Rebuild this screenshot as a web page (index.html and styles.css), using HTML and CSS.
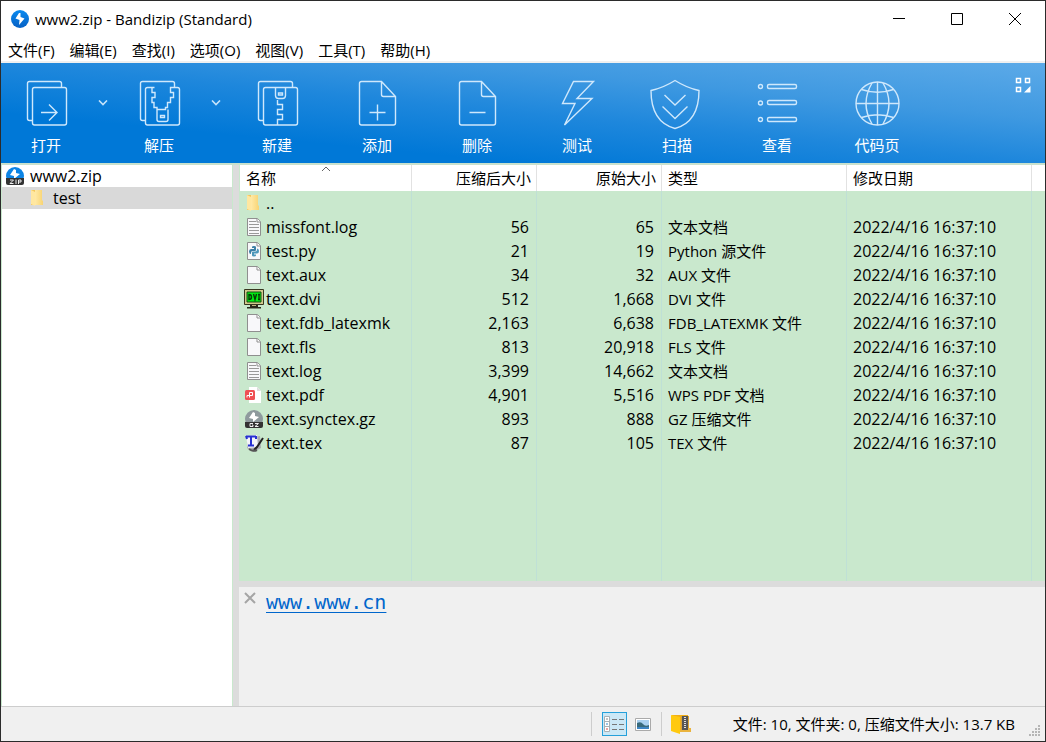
FILE: index.html
```html
<!DOCTYPE html>
<html lang="zh-CN">
<head>
<meta charset="utf-8">
<title>www2.zip - Bandizip (Standard)</title>
<link rel="stylesheet" href="styles.css">
</head>
<body>
<svg class="defs" aria-hidden="true">
  <defs>
    <linearGradient id="gold" x1="0" x2="1"><stop offset="0" stop-color="#ffe9a6"/><stop offset="1" stop-color="#f8d473"/></linearGradient>
    <linearGradient id="blue" x1="0" y1="0" x2="0" y2="1"><stop offset="0" stop-color="#0a8af0"/><stop offset="1" stop-color="#0761c4"/></linearGradient>
    <symbol id="folder" viewBox="0 0 20 20">
      <path d="M3 2h9v15H3z" fill="#f3c75c"/><path d="M7 2h7v10l1 1v4H7z" fill="url(#gold)"/><path d="M3 2l4 2v14l-4-2z" fill="#ffe7a0"/>
    </symbol>
    <symbol id="page" viewBox="0 0 20 20">
      <path d="M3.500 1.500h10l3 3v14h-13z" fill="#f8f8fa" stroke="#8f8f8f"/><path d="M13 1.500v3.500h3.500" fill="#fff" stroke="#8f8f8f"/>
    </symbol>
    <symbol id="text" viewBox="0 0 20 20">
      <use href="#page"/><path d="M5 4.500h7M5 7.500h10M5 10.500h10M5 13.500h10M5 16.500h10" stroke="#999"/>
    </symbol>
    <symbol id="python" viewBox="0 0 20 20">
      <use href="#page"/>
      <path d="M8 6q0-1 2-1t2 1v3q0 1-1 1H8.500q-1.500 0-1.500 2v1q-2 0-2-2.500T7 8h3V7H8z" fill="#3c7fa6"/>
      <path d="M12 14.500q0 1-2 1t-2-1v-3q0-1 1-1h2.500q1.500 0 1.500-2v-1q2 0 2 2.500t-2 2.500h-3v1h2z" fill="#4b96ba"/>
    </symbol>
    <symbol id="dvi" viewBox="0 0 20 20">
      <path d="M.500.500h19v15H.500z" fill="#d2c98d" stroke="#37351f"/><path d="M3 3h14v10H3z" fill="#00ed13" stroke="#174c13"/>
      <path d="M5 5.500v5q2.500 0 2.500-2.500T5 5.500zM9.500 5l1.500 5.500L12.500 5M15 5.500v5M14 5.500h2M14 10.500h2" fill="none" stroke="#063b06" stroke-width="1.400"/>
      <path d="M6 16h8v2H6zM3 18h14v1.500H3z" fill="#29291c"/><path d="M8 16h4v1H8z" fill="#bbb47c"/>
    </symbol>
    <symbol id="pdf" viewBox="0 0 20 20">
      <path d="M5 2h8l4 4v12H5z" fill="#fff"/><path d="M13 2l4 4h-4z" fill="#ddd"/><rect x="1" y="5" width="10" height="10" rx="1.500" fill="#ef5054"/>
      <path d="M3 12.500v-2h5.500v-3H5.500v5" fill="none" stroke="#fff"/>
    </symbol>
    <symbol id="gz" viewBox="0 0 20 20">
      <circle cx="10" cy="10" r="9" fill="#8e9a9d"/><path d="M9 3l-4 6 4 1v3l6-5-4-1V4z" fill="#fff"/>
      <path d="M1 13h18v4q0 2-2 2H3q-2 0-2-2z" fill="#333"/><path d="M9 14.500H6v3h3V16H8M11 14.500h3.500l-3.500 3h3.500" fill="none" stroke="#eee"/>
    </symbol>
    <symbol id="tex" viewBox="0 0 20 20">
      <path d="M4 5l12-2 1 12-8 4-6-4z" fill="#a9aab0"/><path d="M2 3l11-1 1 12-10 1z" fill="#f4f4fa"/><path d="M2 3.500h10M7 3v9M2 3l1 3M12 3v3M4 12.500h6" fill="none" stroke="#2730d2" stroke-width="2"/>
      <path d="M19 5l-6 9-3 3" fill="none" stroke="#222" stroke-width="2"/><path d="M5 16q4 3 8 1" fill="none" stroke="#555" stroke-width="2"/>
    </symbol>
    <symbol id="zip" viewBox="0 0 20 20">
      <circle cx="10" cy="10" r="9" fill="#0c84e4"/><path d="M9 3l-4 6 4 1v3l6-5-4-1V4z" fill="#fff"/>
      <path d="M1 12h18v5q0 2-2 2H3q-2 0-2-2z" fill="#333"/><path d="M5 14h3.500L5 17.500h3.500M11 13.500v4.500M13.500 18v-4H16v2h-2.500" fill="none" stroke="#eee"/>
    </symbol>
  </defs>
</svg>

<div class="window">
  <header class="titlebar">
    <svg class="logo" viewBox="0 0 18 18"><circle cx="9" cy="9" r="9" fill="url(#blue)"/><path d="M8 3L4.500 8.500l4 1.500L8 15l5.500-6.500-4-1.500V3z" fill="#fff"/></svg>
    <h1 class="title">www2.zip - Bandizip (Standard)</h1>
    <button class="wbtn" aria-label="最小化"><svg viewBox="0 0 12 12"><path d="M0 5.500h12"/></svg></button>
    <button class="wbtn" aria-label="最大化"><svg viewBox="0 0 12 12"><path d="M.500.500h11v11H.500z"/></svg></button>
    <button class="wbtn" aria-label="关闭"><svg viewBox="0 0 12 12"><path d="M0 0l12 12M12 0L0 12"/></svg></button>
  </header>

  <nav class="menu">
    <button>文件(F)</button><button>编辑(E)</button><button>查找(I)</button><button>选项(O)</button><button>视图(V)</button><button>工具(T)</button><button>帮助(H)</button>
  </nav>

  <div class="toolbar">
    <button class="tool split"><svg class="ticon" viewBox="0 0 50 50"><path d="M12 40.500H8.500q-2 0-2-2v-35q0-2 2-2h30q2 0 2 2V7"/><rect x="11.500" y="7.500" width="34" height="37.500" rx="2"/><path d="M20 32.500h16M28 24.500l8 8-8 8"/></svg>打开</button>
    <button class="drop" aria-label="打开选项"><svg viewBox="0 0 10 6"><path d="M1 .500l4 4 4-4"/></svg></button>
    <button class="tool split"><svg class="ticon" viewBox="0 0 50 50"><path d="M12 40.500H8.500q-2 0-2-2v-35q0-2 2-2h30q2 0 2 2V7"/><path d="M20.500 7.500h-7q-2 0-2 2V43q0 2 2 2h30q2 0 2-2V9.500q0-2-2-2h-7v5h3v5h-3v5h-3v5h-2v2H23v-2h-3v-5h-2v-5h3v-5h-3v-5zM23 29.500v10q0 2 2 2h7q2 0 2-2v-10"/><path d="M26.500 35.500h4v2h-4z"/></svg>解压</button>
    <button class="drop" aria-label="解压选项"><svg viewBox="0 0 10 6"><path d="M1 .500l4 4 4-4"/></svg></button>
    <button class="tool"><svg class="ticon" viewBox="0 0 50 50"><path d="M12 40.500H8.500q-2 0-2-2v-35q0-2 2-2h30q2 0 2 2V7"/><rect x="11.500" y="7.500" width="34" height="37.500" rx="2"/><path d="M23.500 7.500v8q0 3 3 3h4q3 0 3-3v-8M26.500 13h4v2h-4zM25.500 20v4.500h5v5h-5v5h5v5h-5V45"/></svg>新建</button>
    <button class="tool"><svg class="ticon" viewBox="0 0 50 50"><path d="M29.500 1.500h-20q-2 0-2 2V43q0 2 2 2h32q2 0 2-2V16.500zv13q0 2 2 2h12M17.500 32.500h16M25.500 24.500v16"/></svg>添加</button>
    <button class="tool"><svg class="ticon" viewBox="0 0 50 50"><path d="M29.500 1.500h-20q-2 0-2 2V43q0 2 2 2h32q2 0 2-2V16.500zv13q0 2 2 2h12M17.500 32.500h16"/></svg>删除</button>
    <button class="tool"><svg class="ticon" viewBox="0 0 50 50"><path d="M21.500 1.500h20L25 18.500h15L12.500 45 23 23.500H10.500z"/></svg>测试</button>
    <button class="tool"><svg class="ticon" viewBox="0 0 50 50"><path d="M23 .500Q11 8 -1 10.500-1 42 23 48.500 47 42 47 10.500 35 8 23 .500zM12.500 15L23 25l10.500-10M10.500 26.500l12.500 12 12.500-12"/></svg>扫描</button>
    <button class="tool"><svg class="ticon" viewBox="0 0 50 50"><circle cx="8.500" cy="6.500" r="2"/><circle cx="8.500" cy="23" r="2"/><circle cx="8.500" cy="39.500" r="2"/><rect x="15.500" y="4.500" width="29" height="4" rx="1.500"/><rect x="15.500" y="20.500" width="29" height="4" rx="1.500"/><rect x="15.500" y="37.500" width="29" height="4" rx="1.500"/></svg>查看</button>
    <button class="tool"><svg class="ticon" viewBox="0 0 50 50"><circle cx="25.500" cy="23.500" r="21.500"/><path d="M25.500 2v43M4 23.500h43M9.500 9.500q16 5.500 32 0M9.500 37.500q16-5.500 32 0M20 3Q8 23.500 20 44M31 3q12 20.500 0 41"/></svg>代码页</button>
    <button class="skin" aria-label="工具栏布局"><svg viewBox="0 0 16 16"><path d="M1.500 1.500h4v4h-4zM10.500 1.500h4v4h-4zM1.500 10.500h4v4h-4z" fill="none" stroke="#fff" stroke-width="1.500"/><path d="M15.500 9v6.500H9z" fill="#fff"/></svg></button>
  </div>

  <main class="body">
    <aside class="tree">
      <button class="node"><svg class="icon" viewBox="0 0 20 20"><use href="#zip"/></svg>www2.zip</button>
      <button class="node child"><svg class="icon" viewBox="0 0 20 20"><use href="#folder"/></svg>test</button>
    </aside>
    <section class="content">
      <div class="list">
        <table>
          <colgroup><col class="c-name"><col class="c-size"><col class="c-size"><col class="c-text"><col class="c-text"><col></colgroup>
          <thead><tr><th class="sorted">名称<svg class="sort" viewBox="0 0 10 6"><path d="M1 5l4-4 4 4"/></svg></th><th class="num">压缩后大小</th><th class="num">原始大小</th><th>类型</th><th>修改日期</th><th></th></tr></thead>
          <tbody>
            <tr><td><div class="file"><svg class="icon"><use href="#folder"/></svg>..</div></td><td></td><td></td><td></td><td></td><td></td></tr>
            <tr><td><div class="file"><svg class="icon"><use href="#text"/></svg>missfont.log</div></td><td class="num">56</td><td class="num">65</td><td>文本文档</td><td class="date">2022/4/16 16:37:10</td><td></td></tr>
            <tr><td><div class="file"><svg class="icon"><use href="#python"/></svg>test.py</div></td><td class="num">21</td><td class="num">19</td><td>Python 源文件</td><td class="date">2022/4/16 16:37:10</td><td></td></tr>
            <tr><td><div class="file"><svg class="icon"><use href="#page"/></svg>text.aux</div></td><td class="num">34</td><td class="num">32</td><td>AUX 文件</td><td class="date">2022/4/16 16:37:10</td><td></td></tr>
            <tr><td><div class="file"><svg class="icon"><use href="#dvi"/></svg>text.dvi</div></td><td class="num">512</td><td class="num">1,668</td><td>DVI 文件</td><td class="date">2022/4/16 16:37:10</td><td></td></tr>
            <tr><td><div class="file"><svg class="icon"><use href="#page"/></svg>text.fdb_latexmk</div></td><td class="num">2,163</td><td class="num">6,638</td><td>FDB_LATEXMK 文件</td><td class="date">2022/4/16 16:37:10</td><td></td></tr>
            <tr><td><div class="file"><svg class="icon"><use href="#page"/></svg>text.fls</div></td><td class="num">813</td><td class="num">20,918</td><td>FLS 文件</td><td class="date">2022/4/16 16:37:10</td><td></td></tr>
            <tr><td><div class="file"><svg class="icon"><use href="#text"/></svg>text.log</div></td><td class="num">3,399</td><td class="num">14,662</td><td>文本文档</td><td class="date">2022/4/16 16:37:10</td><td></td></tr>
            <tr><td><div class="file"><svg class="icon"><use href="#pdf"/></svg>text.pdf</div></td><td class="num">4,901</td><td class="num">5,516</td><td>WPS PDF 文档</td><td class="date">2022/4/16 16:37:10</td><td></td></tr>
            <tr><td><div class="file"><svg class="icon"><use href="#gz"/></svg>text.synctex.gz</div></td><td class="num">893</td><td class="num">888</td><td>GZ 压缩文件</td><td class="date">2022/4/16 16:37:10</td><td></td></tr>
            <tr><td><div class="file"><svg class="icon"><use href="#tex"/></svg>text.tex</div></td><td class="num">87</td><td class="num">105</td><td>TEX 文件</td><td class="date">2022/4/16 16:37:10</td><td></td></tr>
            <tr class="rest"><td></td><td></td><td></td><td></td><td></td><td></td></tr>
          </tbody>
        </table>
      </div>
      <div class="comment">
        <button class="dismiss" aria-label="关闭注释"><svg viewBox="0 0 12 12"><path d="M1 1l10 10M11 1L1 11"/></svg></button>
        <a href="#comment">www.www.cn</a>
      </div>
    </section>
  </main>

  <footer class="status">
    <div class="views">
      <button class="view on" aria-label="详细信息"><svg viewBox="0 0 20 18"><path d="M.500 1.500h5v15h-5z" fill="#fff" stroke="#a9b0b5"/><path d="M1 6.500h4M1 11.500h4" stroke="#a9b0b5"/><path d="M2 4h2" stroke="#888"/><path d="M2 9h2" stroke="#3787c8"/><path d="M2 14h2" stroke="#d44"/><path d="M8 4.500h5M15 4.500h5M8 9.500h5M15 9.500h5M8 14.500h5M15 14.500h5" stroke="#777"/></svg></button>
      <button class="view" aria-label="缩略图"><svg viewBox="0 0 20 18"><path d="M2.500 3.500h15v12h-15z" fill="#fff" stroke="#aaa"/><path d="M4 5h12v9H4z" fill="#a9d0f0"/><path d="M4 8q4-2 6 1t6 1v2H4z" fill="#386a7c"/><path d="M4 12h12v2H4z" fill="#3d85c4"/></svg></button>
    </div>
    <div class="archive"><svg viewBox="0 0 20 20"><path d="M1 1h16v17H3z" fill="#f0ad17"/><path d="M10 2h8v16h-8z" fill="#d8a437"/><path d="M11 2h6v14h-6z" fill="#555"/><path d="M14 3v12" stroke="#ddd" stroke-width="2" stroke-dasharray="1 1"/><path d="M0 1l9 2v17l-9-3z" fill="#ffc90f"/><path d="M17 14h3v4H9v-2h8z" fill="#eab33d"/></svg></div>
    <p class="summary">文件: 10, 文件夹: 0, 压缩文件大小: 13.7 KB</p>
    <svg class="grip" viewBox="0 0 12 12"><path d="M9 1h2M6 4h2M9 4h2M3 7h2M6 7h2M9 7h2M0 10h2M3 10h2M6 10h2M9 10h2" stroke="#b5b5b5" stroke-width="2"/></svg>
  </footer>
</div>
</body>
</html>
```
FILE: styles.css
```css
* { box-sizing: border-box; }
body {
  margin: 0;
  color: #000;
  font: 15px/20px "Open Sans", "Noto Sans CJK SC", sans-serif;
}
button { margin: 0; padding: 0; border: 0; background: none; color: inherit; font: inherit; }
svg { display: block; flex: none; }
.defs { position: absolute; width: 0; height: 0; }

.window {
  display: flex;
  flex-direction: column;
  min-height: 100vh;
  border: 1px solid #2b2b2b;
  background: #f0f0f0;
}

.titlebar { display: flex; align-items: center; height: 36px; padding: 0 1px 0 10px; background: #fff; }
.logo { width: 18px; height: 18px; }
.title { flex: 1; margin: 0 0 0 6px; font-size: 15px; font-weight: 400; }
.wbtn { display: grid; place-items: center; width: 58px; height: 36px; }
.wbtn svg { width: 12px; height: 12px; fill: none; stroke: #000; }

.menu { display: flex; gap: 15px; height: 26px; padding: 1px 0 0 7px; border-bottom: 2px solid #f0f0f0; background: #fff; }

.toolbar {
  display: flex;
  height: 100px;
  background: linear-gradient(185.5deg, #5caae8 0%, #3f99e1 28%, #1e87dc 50%, #0078d7 75%);
  color: #fff;
}
.tool {
  display: flex;
  flex-direction: column;
  align-items: center;
  gap: 5px;
  width: 100px;
  padding-top: 17px;
}
.split { width: 90px; }
.ticon { width: 50px; height: 50px; overflow: visible; fill: none; stroke: #cfe8fc; stroke-width: 1.4; }
.drop { display: grid; place-items: start center; width: 23px; padding-top: 37px; }
.drop svg { width: 10px; height: 6px; fill: none; stroke: #c5e3fa; stroke-width: 1.6; }
.skin { align-self: flex-start; margin: 14px 14px 0 auto; }
.skin svg { width: 16px; height: 16px; }

.body { flex: 1; display: flex; border-top: 2px solid #c9e1cd; background: #dcdcdc; }
.tree {
  flex: 0 0 232px;
  margin-right: 6px;
  border: solid #c9e8cd;
  border-width: 0 1px;
  background: #fff;
}
.node { display: flex; align-items: center; gap: 5px; width: 100%; height: 22px; padding-left: 3px; font-size: 16px; }
.child { padding-left: 26px; background: #d9d9d9; }
.icon { width: 20px; height: 20px; }

.content { flex: 1; display: flex; flex-direction: column; gap: 6px; min-width: 0; }
.list { flex: 1; display: flex; border-left: 1px solid #c9e8cd; background: #c9e8cd; }
table { width: 100%; border-collapse: separate; border-spacing: 0; table-layout: fixed; }
.c-name { width: 172px; }
.c-size { width: 125px; }
.c-text { width: 185px; }
th, td { height: 24px; padding: 0 6px; border-right: 1px solid #bfe0d6; text-align: left; font-weight: 400; white-space: nowrap; }
th { height: 26px; border-color: #e2e2e2; background: #fff; }
th:last-child, td:last-child { padding: 0; border-right: 0; }
td.num { padding-right: 7px; text-align: right; }
td.num, .date, .file { font-size: 16px; }
th.num { padding-right: 5px; text-align: right; }
td:first-child { padding: 0 0 0 4px; }
.rest td { height: auto; }
.file { display: flex; align-items: center; gap: 2px; }
.sorted { position: relative; }
.sort { position: absolute; top: 1px; left: calc(50% - 5px); width: 10px; height: 6px; fill: none; stroke: #666; }

.comment { display: flex; align-items: flex-start; gap: 10px; height: 119px; padding: 4px 5px; background: #f0f0f0; }
.comment a { color: #0066cc; font: 20px/22px "DejaVu Sans Mono", monospace; text-underline-offset: 3px; text-decoration-thickness: 1px; }
.dismiss { width: 12px; height: 14px; }
.dismiss svg { width: 12px; height: 12px; fill: none; stroke: #a5a5a5; stroke-width: 2; }

.status { display: flex; align-items: center; height: 35px; border-top: 1px solid #cdcdcd; }
.views { display: flex; gap: 4px; margin-left: auto; padding: 0 5px 0 10px; border: solid #cdcdcd; border-width: 0 1px; }
.view { display: grid; place-items: center; width: 25px; height: 24px; }
.on { border: 1px solid #26a0da; background: #cbe8f6; }
.view svg { width: 20px; height: 18px; fill: none; }
.archive { margin: 0 42px 0 9px; }
.archive svg { width: 20px; height: 20px; }
.summary { margin: 0; }
.grip { align-self: flex-end; width: 12px; height: 12px; margin: 0 4px 4px 14px; }
```
